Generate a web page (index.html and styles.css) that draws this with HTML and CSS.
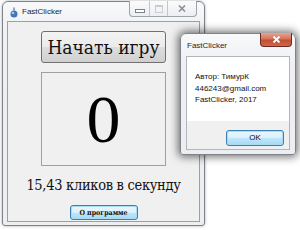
FILE: index.html
```html
<!DOCTYPE html>
<html>
<head>
<meta charset="utf-8">
<link rel="stylesheet" href="styles.css">
</head>
<body>
<div class="desktop">
  <div class="win win-main">
    <div class="titlebar">
      <svg class="app-icon" width="8" height="11" viewBox="0 0 8 11">
        <rect x="3" y="0.5" width="2" height="3" fill="#9aa4ae"/>
        <circle cx="4" cy="7" r="3.5" fill="#3f78b8"/>
        <circle cx="3" cy="6" r="1.3" fill="#a9cdf0"/>
      </svg>
      <span class="title">FastClicker</span>
    </div>
    <div class="caption-btns">
      <div class="cb cb-min"><span class="min-bar"></span></div>
      <div class="cb cb-max"><span class="max-box"></span></div>
      <div class="cb cb-close">
        <svg width="8" height="7" viewBox="0 0 8 7"><path d="M1 0.5 L7 6.5 M7 0.5 L1 6.5" stroke="#8a8f96" stroke-width="1.6"/></svg>
      </div>
    </div>
    <div class="client">
      <button class="btn-start">Начать игру</button>
      <div class="counter">0</div>
      <div class="rate">15,43 кликов в секунду</div>
      <button class="btn-about">О программе</button>
    </div>
  </div>

  <div class="win win-dlg">
    <div class="titlebar dlg-titlebar">
      <span class="title">FastClicker</span>
    </div>
    <div class="dlg-close">
      <svg width="9" height="7" viewBox="0 0 9 7"><path d="M1.5 0.5 L7.5 6.5 M7.5 0.5 L1.5 6.5" stroke="#ffffff" stroke-width="1.8"/></svg>
    </div>
    <div class="dlg-client">
      <div class="dlg-msg">
        <div>Автор: ТимурК</div>
        <div>446243@gmail.com</div>
        <div>FastClicker, 2017</div>
      </div>
      <div class="dlg-foot">
        <button class="btn-ok">OK</button>
      </div>
    </div>
  </div>
</div>
</body>
</html>
```

FILE: styles.css
```css
html, body {
  margin: 0;
  padding: 0;
  background: #ffffff;
}
.desktop {
  position: relative;
  width: 300px;
  height: 230px;
  overflow: hidden;
  background: #ffffff;
}
.win {
  position: absolute;
  box-sizing: border-box;
  border: 1px solid #7f8389;
  border-radius: 6px 6px 3px 3px;
  background: linear-gradient(#f8f9fb, #eef0f3 30px, #eceef1);
  display: flex;
  flex-direction: column;
}
.win-main {
  left: 2px;
  top: 1px;
  width: 203px;
  height: 225px;
  padding: 0 4px 3px 4px;
  box-shadow: 0 0 3px rgba(0,0,0,0.35);
}
.titlebar {
  height: 19px;
  display: flex;
  align-items: center;
  gap: 4px;
  padding-left: 3px;
  flex: none;
}
.app-icon { display: block; margin-top: 1px; }
.title {
  font-family: "Liberation Sans", Arial, sans-serif;
  font-size: 8px;
  color: #1e1e1e;
}
.caption-btns {
  position: absolute;
  top: -1px;
  right: 7px;
  height: 15px;
  display: flex;
  border: 1px solid #9ea3aa;
  border-top: none;
  border-radius: 0 0 4px 4px;
  background: linear-gradient(#fbfbfc, #eceef1);
  overflow: hidden;
}
.cb {
  display: flex;
  align-items: center;
  justify-content: center;
  height: 100%;
}
.cb + .cb { border-left: 1px solid #c3c7cc; }
.cb-min { width: 19px; }
.cb-max { width: 17px; }
.cb-close { width: 28px; }
.min-bar {
  width: 8px;
  height: 2px;
  border: 1px solid #7d838b;
  background: #fff;
  margin-top: 4px;
}
.max-box {
  width: 6px;
  height: 5px;
  border: 1px solid #c9ccd1;
  border-top-width: 2px;
}
.client {
  flex: 1;
  border: 1px solid #9ba0a6;
  background: #f0f0f0;
  display: flex;
  flex-direction: column;
  align-items: center;
  padding-top: 9px;
}
.btn-start {
  width: 125px;
  height: 32px;
  box-sizing: border-box;
  border: 1px solid #707070;
  border-radius: 3px;
  background: linear-gradient(#f3f3f3 0%, #ebebeb 50%, #dddddd 51%, #d0d0d0 100%);
  font-family: "DejaVu Serif", "Liberation Serif", serif;
  font-stretch: condensed;
  font-size: 19px;
  color: #111;
  padding: 0;
  line-height: 1;
}
.counter {
  margin-top: 9px;
  width: 125px;
  height: 94px;
  box-sizing: border-box;
  border: 1px solid #a0a0a0;
  display: flex;
  align-items: center;
  justify-content: center;
  font-family: "Liberation Serif", "Times New Roman", serif;
  font-size: 68px;
  color: #000;
  line-height: 1;
}
.rate {
  margin-top: 9px;
  font-family: "DejaVu Serif", "Liberation Serif", serif;
  font-stretch: condensed;
  font-size: 14.5px;
  letter-spacing: -0.3px;
  color: #111;
  line-height: 20px;
}
.btn-about {
  margin-top: 10px;
  width: 68px;
  height: 15px;
  box-sizing: border-box;
  border: 1px solid #3c7fb1;
  border-radius: 3px;
  box-shadow: inset 0 0 0 1px #a8dcf4;
  background: linear-gradient(#eaf6fd, #d9f0fc 50%, #bee6fd 51%, #a7d9f5);
  font-family: "DejaVu Serif", "Liberation Serif", serif;
  font-stretch: condensed;
  font-weight: bold;
  font-size: 7px;
  color: #111;
  padding: 0;
  line-height: 1;
}
.win-dlg {
  left: 180px;
  top: 33px;
  width: 116px;
  height: 122px;
  padding: 0 5px 4px 5px;
  box-shadow: 0 0 8px 2px rgba(0,0,0,0.55);
}
.dlg-titlebar {
  height: 22px;
  padding-left: 1px;
}
.dlg-close {
  position: absolute;
  top: -1px;
  right: 3px;
  width: 32px;
  height: 14px;
  box-sizing: border-box;
  border: 1px solid #6d2a1e;
  border-top: none;
  border-radius: 0 0 4px 4px;
  background: linear-gradient(#e8a493 0%, #d4735c 45%, #c44d33 55%, #d2664a 100%);
  display: flex;
  align-items: center;
  justify-content: center;
}
.dlg-client {
  flex: 1;
  border: 1px solid #b2b6bb;
  background: #f0f0f0;
  display: flex;
  flex-direction: column;
}
.dlg-msg {
  background: #ffffff;
  height: 64px;
  box-sizing: border-box;
  padding: 14px 0 0 8px;
  font-family: "Liberation Sans", Arial, sans-serif;
  font-size: 8px;
  line-height: 11.5px;
  color: #111;
}
.dlg-foot {
  flex: 1;
  display: flex;
  justify-content: flex-end;
  align-items: flex-start;
  padding: 9px 5px 0 0;
}
.btn-ok {
  width: 58px;
  height: 16px;
  box-sizing: border-box;
  border: 1px solid #3c7fb1;
  border-radius: 3px;
  box-shadow: inset 0 0 0 1px #a8dcf4;
  background: linear-gradient(#eaf6fd, #d9f0fc 50%, #bee6fd 51%, #a7d9f5);
  font-family: "Liberation Sans", Arial, sans-serif;
  font-size: 8px;
  color: #111;
  padding: 0;
  line-height: 1;
}
```
